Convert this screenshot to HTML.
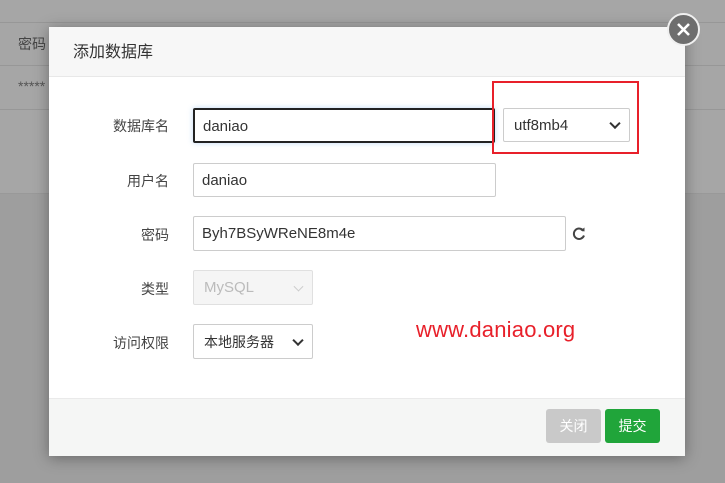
<!DOCTYPE html>
<html><head><meta charset="utf-8"><style>
*{box-sizing:border-box;margin:0;padding:0}
body{width:725px;height:483px;overflow:hidden;background:#9e9e9e;font-family:"Liberation Sans","Noto Sans CJK SC",sans-serif;position:relative;font-size:14px;color:#333}
.abs{position:absolute}
.bgtop{left:0;top:0;width:725px;height:193px;background:#a6a6a6}
.line{left:0;width:725px;height:1px;background:#979797}
.dlg{left:49px;top:27px;width:636px;height:429px;background:#fff;box-shadow:0 2px 14px rgba(0,0,0,.35)}
.hdr{left:0;top:0;width:636px;height:50px;background:#f7f7f7;border-bottom:1px solid #e8e8e8;font-size:16px;line-height:52px;padding-left:24px;color:#333}
.ftr{left:0;top:371px;width:636px;height:58px;background:#f5f6f5;border-top:1px solid #eaeaea}
.lbl{width:120px;text-align:right;font-size:14px;color:#444}
.inp{border:1px solid #ccc;border-radius:2px;background:#fff;padding-left:8px;font-size:15px;color:#333}
.chev{position:absolute;right:10px;top:50%;width:8px;height:8px;border-right:2px solid #333;border-bottom:2px solid #333;transform:translateY(-70%) rotate(45deg)}
.btn{width:55px;height:34px;border-radius:3px;color:#fff;text-align:center;line-height:34px;font-size:14px}
</style></head><body>
<div class="abs bgtop"></div>
<div class="abs line" style="top:22px"></div>
<div class="abs line" style="top:65px"></div>
<div class="abs line" style="top:109px"></div>
<div class="abs line" style="top:193px;background:#999"></div>
<div class="abs" style="left:18px;top:34px;color:#444">密码</div>
<div class="abs" style="left:18px;top:78px;color:#555">*****</div>
<div class="abs dlg">
 <div class="abs hdr">添加数据库</div>
 <div class="abs ftr"></div>
</div>
<div class="abs lbl" style="left:49px;top:116px">数据库名</div>
<div class="abs inp" style="left:193px;top:108px;width:302px;height:35px;line-height:33px;border:2px solid #222;box-shadow:0 0 6px rgba(100,160,230,.4)">daniao</div>
<div class="abs inp" style="left:503px;top:108px;width:127px;height:34px;line-height:33px;padding-left:10px">utf8mb4<span class="chev"></span></div>
<div class="abs" style="left:492px;top:81px;width:147px;height:73px;border:2px solid #e8202a"></div>
<div class="abs lbl" style="left:49px;top:171px">用户名</div>
<div class="abs inp" style="left:193px;top:163px;width:303px;height:34px;line-height:33px">daniao</div>
<div class="abs lbl" style="left:49px;top:225px">密码</div>
<div class="abs inp" style="left:193px;top:216px;width:373px;height:35px;line-height:34px">Byh7BSyWReNE8m4e</div>
<svg class="abs" style="left:571px;top:226px" width="16" height="16" viewBox="0 0 16 16"><path d="M12.5 5A5.2 5.2 0 1 0 13 9.5" fill="none" stroke="#444" stroke-width="2"/><path d="M9.5 4.5L13.5 5.5L13.5 1.5Z" fill="#444"/></svg>
<div class="abs lbl" style="left:49px;top:279px">类型</div>
<div class="abs inp" style="left:193px;top:270px;width:120px;height:35px;line-height:34px;background:#f5f5f5;color:#bbb;border-color:#e0e0e0;padding-left:10px">MySQL<span class="chev" style="border-color:#ccc;width:7px;height:7px;border-width:1.5px"></span></div>
<div class="abs lbl" style="left:49px;top:333px">访问权限</div>
<div class="abs inp" style="left:193px;top:324px;width:120px;height:35px;line-height:34px;padding-left:10px;font-size:14px">本地服务器<span class="chev"></span></div>
<div class="abs" style="left:416px;top:317px;color:#e8202a;font-size:22px;letter-spacing:0.2px">www.daniao.org</div>
<div class="abs btn" style="left:546px;top:409px;background:#c9c9c9">关闭</div>
<div class="abs btn" style="left:605px;top:409px;background:#20a53a">提交</div>
<div class="abs" style="left:667px;top:13px;width:33px;height:33px;border-radius:50%;background:#6e6e6e;border:2px solid #f0f0f0"></div>
<svg class="abs" style="left:675px;top:21px" width="17" height="17" viewBox="0 0 17 17"><path d="M3 3L14 14M14 3L3 14" stroke="#fff" stroke-width="2.6"/></svg>
</body></html>
